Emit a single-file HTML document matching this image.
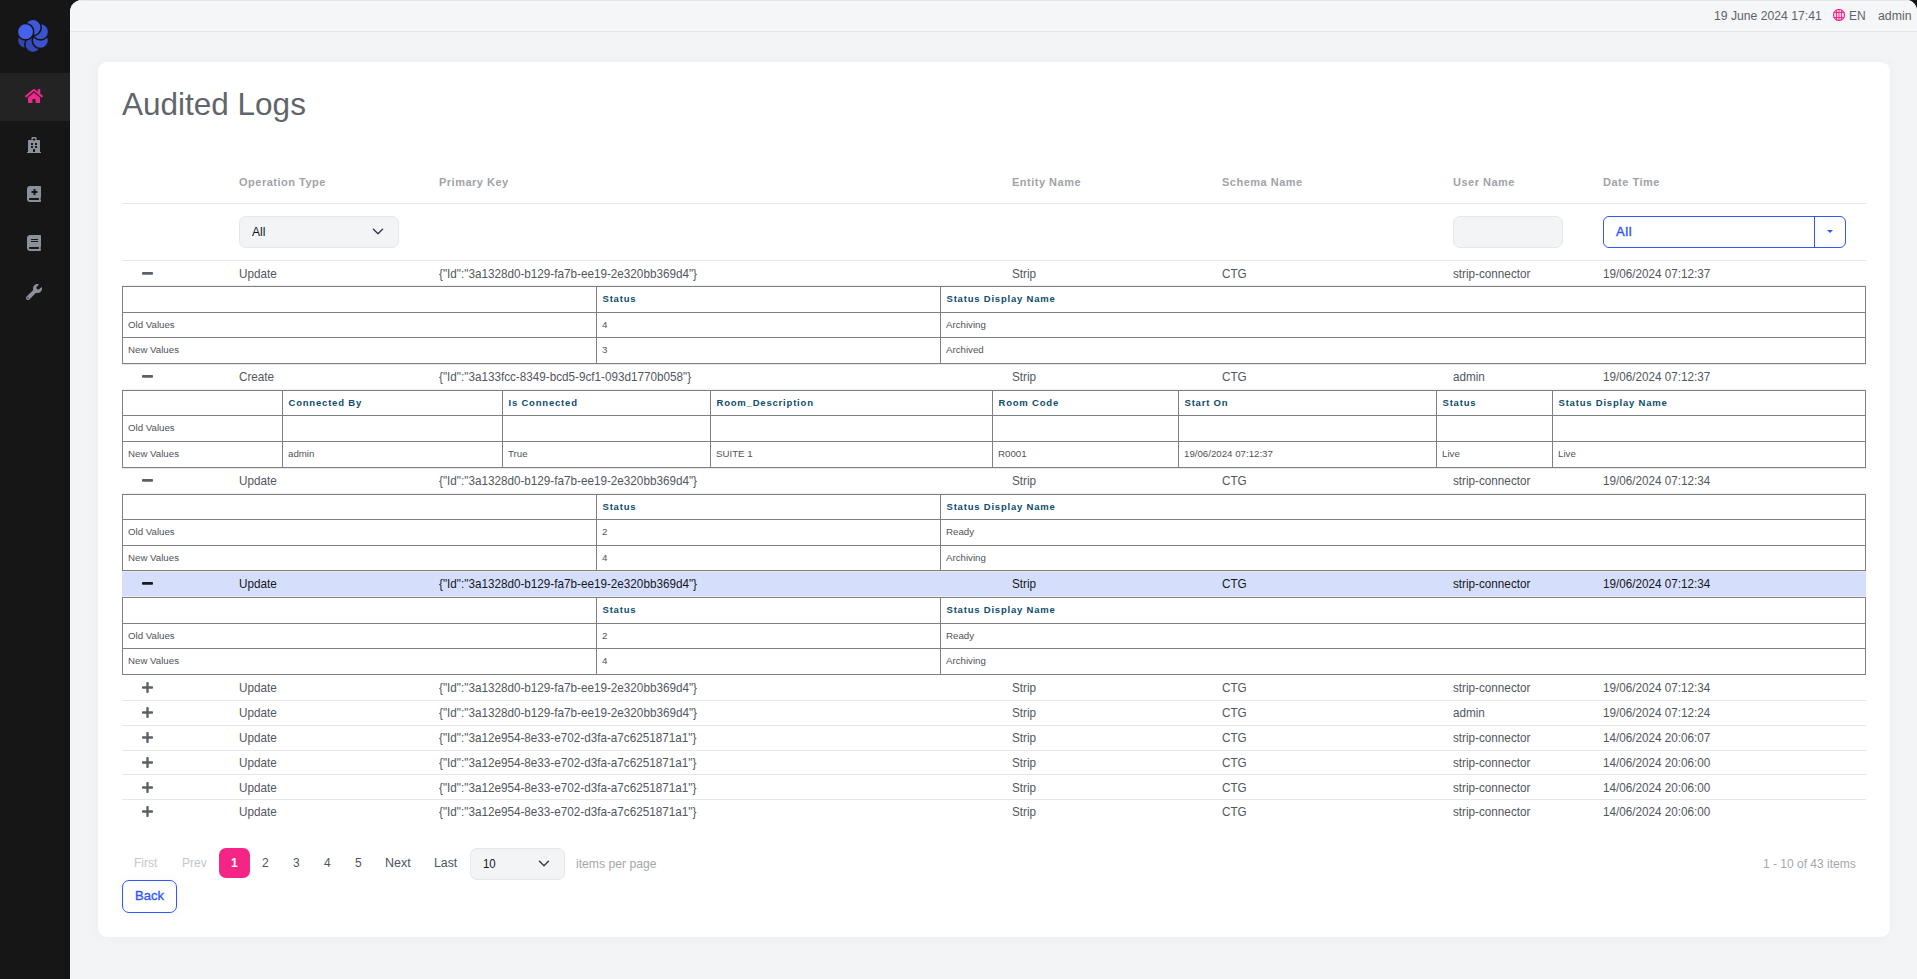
<!DOCTYPE html>
<html><head><meta charset="utf-8">
<style>
*{box-sizing:border-box;margin:0;padding:0}
html,body{width:1917px;height:979px;overflow:hidden}
body{background:#161616;font-family:"Liberation Sans",sans-serif;position:relative}
.abs{position:absolute}
#main{left:70px;top:0;width:1847px;height:979px;background:#f3f4f6;border-top-left-radius:12px;border-top-right-radius:11px;overflow:hidden}
#hdr{left:0;top:0;width:1847px;height:32px;border-top:1px solid #e5e7eb;border-bottom:1px solid #e5e7eb;background:#f5f6f8}
.t{position:absolute;white-space:pre;line-height:14px}
#card{left:98px;top:62px;width:1792px;height:875px;background:#fff;border-radius:9px;box-shadow:0 0 14px rgba(0,0,0,0.035)}
.hl{position:absolute;left:122px;width:1744px;height:1px;background:#e5e7eb}
.th{font-size:11px;font-weight:bold;letter-spacing:0.5px;color:#9fa3a8}
.td{font-size:13px;color:#52575d;transform:scaleX(0.9);transform-origin:0 0}
.hi .td{color:#16181b}
.gl{position:absolute;background:#808080}
.nh{font-size:9.5px;font-weight:bold;letter-spacing:0.8px;color:#0d4c6a}
.nv{font-size:9.7px;color:#4f5358}
.sel{position:absolute;background:#f3f4f6;border:1px solid #e5e7eb;border-radius:7px}
</style></head><body>
<div id="main" class="abs"><div id="hdr" class="abs"></div></div>
<div class="abs" style="left:0;top:73px;width:70px;height:48px;background:#232323"></div>

<svg class="abs" style="left:25px;top:88px;width:18px;height:16px" viewBox="0 0 576 512" preserveAspectRatio="none"><path fill="#e82a88" d="M280.37 148.26L96 300.11V464a16 16 0 0 0 16 16l112.06-.29a16 16 0 0 0 15.92-16V368a16 16 0 0 1 16-16h64a16 16 0 0 1 16 16v95.64a16 16 0 0 0 16 16.05L464 480a16 16 0 0 0 16-16V300L295.67 148.26a12.19 12.19 0 0 0-15.3 0zM571.6 251.47L488 182.56V44.05a12 12 0 0 0-12-12h-56a12 12 0 0 0-12 12v72.61L318.47 43a48 48 0 0 0-61 0L4.34 251.47a12 12 0 0 0-1.6 16.9l25.5 31A12 12 0 0 0 45.15 301l235.22-193.74a12.19 12.19 0 0 1 15.3 0L530.9 301a12 12 0 0 0 16.9-1.6l25.5-31a12 12 0 0 0-1.7-16.93z"/></svg>
<svg class="abs" style="left:27px;top:137px;width:14px;height:16px" viewBox="0 0 448 512" preserveAspectRatio="none"><path fill="#8b909a" d="M448 492v20H0v-20c0-6.627 5.373-12 12-12h20V120c0-13.255 10.745-24 24-24h88V24c0-13.255 10.745-24 24-24h112c13.255 0 24 10.745 24 24v72h88c13.255 0 24 10.745 24 24v360h20c6.627 0 12 5.373 12 12zM308 192h-40c-6.627 0-12 5.373-12 12v40c0 6.627 5.373 12 12 12h40c6.627 0 12-5.373 12-12v-40c0-6.627-5.373-12-12-12zm-168 64h40c6.627 0 12-5.373 12-12v-40c0-6.627-5.373-12-12-12h-40c-6.627 0-12 5.373-12 12v40c0 6.627 5.373 12 12 12zm104 128h-40c-6.627 0-12 5.373-12 12v84h64v-84c0-6.627-5.373-12-12-12zm64-96h-40c-6.627 0-12 5.373-12 12v40c0 6.627 5.373 12 12 12h40c6.627 0 12-5.373 12-12v-40c0-6.627-5.373-12-12-12zm-116 12c0-6.627-5.373-12-12-12h-40c-6.627 0-12 5.373-12 12v40c0 6.627 5.373 12 12 12h40c6.627 0 12-5.373 12-12v-40zM182 96h26v26a6 6 0 0 0 6 6h20a6 6 0 0 0 6-6V96h26a6 6 0 0 0 6-6V70a6 6 0 0 0-6-6h-26V38a6 6 0 0 0-6-6h-20a6 6 0 0 0-6 6v26h-26a6 6 0 0 0-6 6v20a6 6 0 0 0 6 6z"/></svg>
<svg class="abs" style="left:27px;top:186px;width:14px;height:16px" viewBox="0 0 448 512" preserveAspectRatio="none"><path fill="#8b909a" d="M448 358.4V25.6c0-16-9.6-25.6-25.6-25.6H96C41.6 0 0 41.6 0 96v320c0 54.4 41.6 96 96 96h326.4c12.8 0 25.6-9.6 25.6-25.6v-16c0-6.4-3.2-12.8-9.6-19.2-3.2-16-3.2-60.8 0-73.6 6.4-3.2 9.6-9.6 9.6-19.2zM144 168a8 8 0 0 1 8-8h56v-56a8 8 0 0 1 8-8h48a8 8 0 0 1 8 8v56h56a8 8 0 0 1 8 8v48a8 8 0 0 1-8 8h-56v56a8 8 0 0 1-8 8h-48a8 8 0 0 1-8-8v-56h-56a8 8 0 0 1-8-8zm236.8 280H96c-19.2 0-32-12.8-32-32s16-32 32-32h284.8z"/></svg>
<svg class="abs" style="left:27px;top:235px;width:14px;height:16px" viewBox="0 0 448 512" preserveAspectRatio="none"><path fill="#8b909a" d="M448 360V24c0-13.3-10.7-24-24-24H96C43 0 0 43 0 96v320c0 53 43 96 96 96h328c13.3 0 24-10.7 24-24v-16c0-7.5-3.5-14.3-8.9-18.7-4.2-15.4-4.2-59.3 0-74.7 5.4-4.3 8.9-11.1 8.9-18.6zM128 134c0-3.3 2.7-6 6-6h212c3.3 0 6 2.7 6 6v20c0 3.3-2.7 6-6 6H134c-3.3 0-6-2.7-6-6v-20zm0 64c0-3.3 2.7-6 6-6h212c3.300 0 6 2.7 6 6v20c0 3.3-2.7 6-6 6H134c-3.3 0-6-2.7-6-6v-20zm253.4 250H96c-17.7 0-32-14.3-32-32 0-17.6 14.4-32 32-32h285.4c-1.9 17.1-1.9 46.9 0 64z"/></svg>
<svg class="abs" style="left:26px;top:284px;width:16px;height:16px" viewBox="0 0 512 512" preserveAspectRatio="none"><path fill="#8b909a" d="M507.73 109.1c-2.240-9.03-13.54-12.09-20.12-5.51l-74.36 74.36-67.88-11.31-11.31-67.88 74.36-74.36c6.62-6.62 3.43-17.9-5.66-20.16-47.38-11.74-99.55.91-136.58 37.93-39.64 39.64-50.55 97.1-34.05 147.2L18.74 402.76c-24.99 24.99-24.99 65.51 0 90.5 24.99 24.99 65.51 24.99 90.5 0l213.21-213.21c50.12 16.71 107.47 5.68 147.37-34.22 37.07-37.07 49.7-89.32 37.91-136.73zM64 472c-13.25 0-24-10.75-24-24 0-13.26 10.75-24 24-24s24 10.74 24 24c0 13.25-10.75 24-24 24z"/></svg>
<svg class="abs" style="left:0;top:0;width:70px;height:72px" viewBox="0 0 70 72"><circle cx="25.55" cy="40.30" r="8.2" fill="#3347b0" stroke="#161616" stroke-width="1.6"/><circle cx="33.00" cy="44.60" r="8.2" fill="#3448b8" stroke="#161616" stroke-width="1.6"/><circle cx="40.45" cy="40.30" r="8.2" fill="#3a52cc" stroke="#161616" stroke-width="1.6"/><circle cx="40.45" cy="31.70" r="8.2" fill="#3a54d0" stroke="#161616" stroke-width="1.6"/><circle cx="33.00" cy="27.40" r="8.2" fill="#3d58d8" stroke="#161616" stroke-width="1.6"/><circle cx="25.55" cy="31.70" r="8.2" fill="#4562ee" stroke="#161616" stroke-width="1.6"/></svg>
<div class="t " style="left:1714px;top:9px;font-size:12.2px;color:#5e636b">19 June 2024 17:41</div>
<svg class="abs" style="left:1833px;top:9px;width:12px;height:12px" viewBox="0 0 12 12"><circle cx="6" cy="6" r="5.6" fill="#fbd3e4"/><circle cx="6" cy="6" r="5.5" fill="none" stroke="#f52585" stroke-width="1.1"/><path d="M0.5 3.5H11.5M0.5 8.5H11.5M3.5 0.8V11.2M6 0.5V11.5M8.5 0.8V11.2" stroke="#f52585" stroke-width="0.9" fill="none"/></svg>
<div class="t " style="left:1849px;top:9px;font-size:12px;color:#5e636b">EN</div>
<div class="t " style="left:1878px;top:9px;font-size:12.3px;color:#5e636b">admin</div>
<div id="card" class="abs"></div>
<div class="t " style="left:122px;top:86px;font-size:31.5px;line-height:36px;color:#60656b">Audited Logs</div>
<div class="t th" style="left:239px;top:175px;">Operation Type</div>
<div class="t th" style="left:439px;top:175px;">Primary Key</div>
<div class="t th" style="left:1012px;top:175px;">Entity Name</div>
<div class="t th" style="left:1222px;top:175px;">Schema Name</div>
<div class="t th" style="left:1453px;top:175px;">User Name</div>
<div class="t th" style="left:1603px;top:175px;">Date Time</div>
<div class="hl" style="top:203px"></div>
<div class="hl" style="top:260px"></div>
<div class="sel" style="left:239px;top:216px;width:160px;height:32px"></div>
<div class="t " style="left:252px;top:225px;font-size:13px;color:#111827;transform:scaleX(0.93);transform-origin:0 0">All</div>
<svg class="abs" style="left:371px;top:226px;width:14px;height:10px" viewBox="0 0 14 10"><polyline points="2.5,3.2 7,7.7 11.5,3.2" fill="none" stroke="#374151" stroke-width="1.5" stroke-linecap="round" stroke-linejoin="round"/></svg>
<div class="abs" style="left:1603px;top:216px;width:243px;height:32px;border:1px solid #3355ff;border-radius:6px;background:#fff"></div>
<div class="abs" style="left:1814px;top:216px;width:1px;height:32px;background:#3355ff"></div>
<svg class="abs" style="left:1827px;top:230px;width:6px;height:3px" viewBox="0 0 6 3"><polygon points="0,0 6,0 3,3" fill="#3355ff"/></svg>
<div class="t " style="left:1616px;top:225px;font-size:13px;letter-spacing:0.6px;color:#3355ff;-webkit-text-stroke:0.4px #3355ff">All</div>
<div class="sel" style="left:1453px;top:216px;width:110px;height:32px"></div>
<div class="hl" style="top:364px"></div>
<div class="hl" style="top:468px"></div>
<div class="hl" style="top:571px"></div>
<div class="hl" style="top:285px;background:#eef0f3"></div>
<div class="hl" style="top:389px;background:#eef0f3"></div>
<div class="hl" style="top:493px;background:#eef0f3"></div>
<div class="hl" style="top:596px;background:#eef0f3"></div>
<svg class="abs" style="left:142px;top:272.3px;width:11px;height:2.8px" viewBox="0 208 448 96" preserveAspectRatio="none"><path fill="#5b6066" d="M416 208H32c-17.67 0-32 14.33-32 32v32c0 17.67 14.33 32 32 32h384c17.67 0 32-14.330 32-32v-32c0-17.67-14.33-32-32-32z"/></svg>
<div class="t td" style="left:239px;top:267.0px;">Update</div>
<div class="t td" style="left:439px;top:267.0px;">{&quot;Id&quot;:&quot;3a1328d0-b129-fa7b-ee19-2e320bb369d4&quot;}</div>
<div class="t td" style="left:1012px;top:267.0px;">Strip</div>
<div class="t td" style="left:1222px;top:267.0px;">CTG</div>
<div class="t td" style="left:1453px;top:267.0px;">strip-connector</div>
<div class="t td" style="left:1603px;top:267.0px;">19/06/2024 07:12:37</div>
<div class="gl" style="left:122px;top:286px;width:1744px;height:1px"></div>
<div class="gl" style="left:122px;top:312px;width:1744px;height:1px"></div>
<div class="gl" style="left:122px;top:337px;width:1744px;height:1px"></div>
<div class="gl" style="left:122px;top:363px;width:1744px;height:1px"></div>
<div class="gl" style="left:122px;top:286px;width:1px;height:78px"></div>
<div class="gl" style="left:596px;top:286px;width:1px;height:78px"></div>
<div class="gl" style="left:940px;top:286px;width:1px;height:78px"></div>
<div class="gl" style="left:1865px;top:286px;width:1px;height:78px"></div>
<div class="t nh" style="left:602.5px;top:292.0px">Status</div>
<div class="t nh" style="left:946.5px;top:292.0px">Status Display Name</div>
<div class="t nv" style="left:128px;top:317.5px">Old Values</div>
<div class="t nv" style="left:602px;top:317.5px">4</div>
<div class="t nv" style="left:946px;top:317.5px">Archiving</div>
<div class="t nv" style="left:128px;top:343.0px">New Values</div>
<div class="t nv" style="left:602px;top:343.0px">3</div>
<div class="t nv" style="left:946px;top:343.0px">Archived</div>
<svg class="abs" style="left:142px;top:374.8px;width:11px;height:2.8px" viewBox="0 208 448 96" preserveAspectRatio="none"><path fill="#5b6066" d="M416 208H32c-17.67 0-32 14.33-32 32v32c0 17.67 14.33 32 32 32h384c17.67 0 32-14.330 32-32v-32c0-17.67-14.33-32-32-32z"/></svg>
<div class="t td" style="left:239px;top:369.5px;">Create</div>
<div class="t td" style="left:439px;top:369.5px;">{&quot;Id&quot;:&quot;3a133fcc-8349-bcd5-9cf1-093d1770b058&quot;}</div>
<div class="t td" style="left:1012px;top:369.5px;">Strip</div>
<div class="t td" style="left:1222px;top:369.5px;">CTG</div>
<div class="t td" style="left:1453px;top:369.5px;">admin</div>
<div class="t td" style="left:1603px;top:369.5px;">19/06/2024 07:12:37</div>
<div class="gl" style="left:122px;top:390px;width:1744px;height:1px"></div>
<div class="gl" style="left:122px;top:415px;width:1744px;height:1px"></div>
<div class="gl" style="left:122px;top:441px;width:1744px;height:1px"></div>
<div class="gl" style="left:122px;top:467px;width:1744px;height:1px"></div>
<div class="gl" style="left:122px;top:390px;width:1px;height:78px"></div>
<div class="gl" style="left:282px;top:390px;width:1px;height:78px"></div>
<div class="gl" style="left:502px;top:390px;width:1px;height:78px"></div>
<div class="gl" style="left:710px;top:390px;width:1px;height:78px"></div>
<div class="gl" style="left:992px;top:390px;width:1px;height:78px"></div>
<div class="gl" style="left:1178px;top:390px;width:1px;height:78px"></div>
<div class="gl" style="left:1436px;top:390px;width:1px;height:78px"></div>
<div class="gl" style="left:1552px;top:390px;width:1px;height:78px"></div>
<div class="gl" style="left:1865px;top:390px;width:1px;height:78px"></div>
<div class="t nh" style="left:288.5px;top:395.5px">Connected By</div>
<div class="t nh" style="left:508.5px;top:395.5px">Is Connected</div>
<div class="t nh" style="left:716.5px;top:395.5px">Room_Description</div>
<div class="t nh" style="left:998.5px;top:395.5px">Room Code</div>
<div class="t nh" style="left:1184.5px;top:395.5px">Start On</div>
<div class="t nh" style="left:1442.5px;top:395.5px">Status</div>
<div class="t nh" style="left:1558.5px;top:395.5px">Status Display Name</div>
<div class="t nv" style="left:128px;top:421.0px">Old Values</div>
<div class="t nv" style="left:128px;top:447.0px">New Values</div>
<div class="t nv" style="left:288px;top:447.0px">admin</div>
<div class="t nv" style="left:508px;top:447.0px">True</div>
<div class="t nv" style="left:716px;top:447.0px">SUITE 1</div>
<div class="t nv" style="left:998px;top:447.0px">R0001</div>
<div class="t nv" style="left:1184px;top:447.0px">19/06/2024 07:12:37</div>
<div class="t nv" style="left:1442px;top:447.0px">Live</div>
<div class="t nv" style="left:1558px;top:447.0px">Live</div>
<svg class="abs" style="left:142px;top:478.8px;width:11px;height:2.8px" viewBox="0 208 448 96" preserveAspectRatio="none"><path fill="#5b6066" d="M416 208H32c-17.67 0-32 14.33-32 32v32c0 17.67 14.33 32 32 32h384c17.67 0 32-14.330 32-32v-32c0-17.67-14.33-32-32-32z"/></svg>
<div class="t td" style="left:239px;top:473.5px;">Update</div>
<div class="t td" style="left:439px;top:473.5px;">{&quot;Id&quot;:&quot;3a1328d0-b129-fa7b-ee19-2e320bb369d4&quot;}</div>
<div class="t td" style="left:1012px;top:473.5px;">Strip</div>
<div class="t td" style="left:1222px;top:473.5px;">CTG</div>
<div class="t td" style="left:1453px;top:473.5px;">strip-connector</div>
<div class="t td" style="left:1603px;top:473.5px;">19/06/2024 07:12:34</div>
<div class="gl" style="left:122px;top:494px;width:1744px;height:1px"></div>
<div class="gl" style="left:122px;top:519px;width:1744px;height:1px"></div>
<div class="gl" style="left:122px;top:545px;width:1744px;height:1px"></div>
<div class="gl" style="left:122px;top:570px;width:1744px;height:1px"></div>
<div class="gl" style="left:122px;top:494px;width:1px;height:77px"></div>
<div class="gl" style="left:596px;top:494px;width:1px;height:77px"></div>
<div class="gl" style="left:940px;top:494px;width:1px;height:77px"></div>
<div class="gl" style="left:1865px;top:494px;width:1px;height:77px"></div>
<div class="t nh" style="left:602.5px;top:499.5px">Status</div>
<div class="t nh" style="left:946.5px;top:499.5px">Status Display Name</div>
<div class="t nv" style="left:128px;top:525.0px">Old Values</div>
<div class="t nv" style="left:602px;top:525.0px">2</div>
<div class="t nv" style="left:946px;top:525.0px">Ready</div>
<div class="t nv" style="left:128px;top:550.5px">New Values</div>
<div class="t nv" style="left:602px;top:550.5px">4</div>
<div class="t nv" style="left:946px;top:550.5px">Archiving</div>
<div class="abs" style="left:122px;top:572px;width:1744px;height:24px;background:#d5dffc"></div>
<svg class="abs" style="left:142px;top:581.8px;width:11px;height:2.8px" viewBox="0 208 448 96" preserveAspectRatio="none"><path fill="#17191c" d="M416 208H32c-17.67 0-32 14.33-32 32v32c0 17.67 14.33 32 32 32h384c17.67 0 32-14.330 32-32v-32c0-17.67-14.33-32-32-32z"/></svg>
<div class="t td" style="left:239px;top:576.5px;color:#16181b">Update</div>
<div class="t td" style="left:439px;top:576.5px;color:#16181b">{&quot;Id&quot;:&quot;3a1328d0-b129-fa7b-ee19-2e320bb369d4&quot;}</div>
<div class="t td" style="left:1012px;top:576.5px;color:#16181b">Strip</div>
<div class="t td" style="left:1222px;top:576.5px;color:#16181b">CTG</div>
<div class="t td" style="left:1453px;top:576.5px;color:#16181b">strip-connector</div>
<div class="t td" style="left:1603px;top:576.5px;color:#16181b">19/06/2024 07:12:34</div>
<div class="gl" style="left:122px;top:597px;width:1744px;height:1px"></div>
<div class="gl" style="left:122px;top:623px;width:1744px;height:1px"></div>
<div class="gl" style="left:122px;top:648px;width:1744px;height:1px"></div>
<div class="gl" style="left:122px;top:674px;width:1744px;height:1px"></div>
<div class="gl" style="left:122px;top:597px;width:1px;height:78px"></div>
<div class="gl" style="left:596px;top:597px;width:1px;height:78px"></div>
<div class="gl" style="left:940px;top:597px;width:1px;height:78px"></div>
<div class="gl" style="left:1865px;top:597px;width:1px;height:78px"></div>
<div class="t nh" style="left:602.5px;top:603.0px">Status</div>
<div class="t nh" style="left:946.5px;top:603.0px">Status Display Name</div>
<div class="t nv" style="left:128px;top:628.5px">Old Values</div>
<div class="t nv" style="left:602px;top:628.5px">2</div>
<div class="t nv" style="left:946px;top:628.5px">Ready</div>
<div class="t nv" style="left:128px;top:654.0px">New Values</div>
<div class="t nv" style="left:602px;top:654.0px">4</div>
<div class="t nv" style="left:946px;top:654.0px">Archiving</div>
<svg class="abs" style="left:142px;top:682.0px;width:11px;height:11px" viewBox="0 32 448 448"><path fill="#5b6066" d="M416 208H272V64c0-17.67-14.33-32-32-32h-32c-17.67 0-32 14.33-32 32v144H32c-17.67 0-32 14.33-32 32v32c0 17.67 14.33 32 32 32h144v144c0 17.67 14.33 32 32 32h32c17.67 0 32-14.33 32-32V304h144c17.67 0 32-14.33 32-32v-32c0-17.67-14.33-32-32-32z"/></svg>
<div class="t td" style="left:239px;top:681.0px;">Update</div>
<div class="t td" style="left:439px;top:681.0px;">{&quot;Id&quot;:&quot;3a1328d0-b129-fa7b-ee19-2e320bb369d4&quot;}</div>
<div class="t td" style="left:1012px;top:681.0px;">Strip</div>
<div class="t td" style="left:1222px;top:681.0px;">CTG</div>
<div class="t td" style="left:1453px;top:681.0px;">strip-connector</div>
<div class="t td" style="left:1603px;top:681.0px;">19/06/2024 07:12:34</div>
<div class="hl" style="top:700px"></div>
<svg class="abs" style="left:142px;top:706.8px;width:11px;height:11px" viewBox="0 32 448 448"><path fill="#5b6066" d="M416 208H272V64c0-17.67-14.33-32-32-32h-32c-17.67 0-32 14.33-32 32v144H32c-17.67 0-32 14.33-32 32v32c0 17.67 14.33 32 32 32h144v144c0 17.67 14.33 32 32 32h32c17.67 0 32-14.33 32-32V304h144c17.67 0 32-14.33 32-32v-32c0-17.67-14.33-32-32-32z"/></svg>
<div class="t td" style="left:239px;top:705.8px;">Update</div>
<div class="t td" style="left:439px;top:705.8px;">{&quot;Id&quot;:&quot;3a1328d0-b129-fa7b-ee19-2e320bb369d4&quot;}</div>
<div class="t td" style="left:1012px;top:705.8px;">Strip</div>
<div class="t td" style="left:1222px;top:705.8px;">CTG</div>
<div class="t td" style="left:1453px;top:705.8px;">admin</div>
<div class="t td" style="left:1603px;top:705.8px;">19/06/2024 07:12:24</div>
<div class="hl" style="top:725px"></div>
<svg class="abs" style="left:142px;top:732.0px;width:11px;height:11px" viewBox="0 32 448 448"><path fill="#5b6066" d="M416 208H272V64c0-17.67-14.33-32-32-32h-32c-17.67 0-32 14.33-32 32v144H32c-17.67 0-32 14.33-32 32v32c0 17.67 14.33 32 32 32h144v144c0 17.67 14.33 32 32 32h32c17.67 0 32-14.33 32-32V304h144c17.67 0 32-14.33 32-32v-32c0-17.67-14.33-32-32-32z"/></svg>
<div class="t td" style="left:239px;top:731.0px;">Update</div>
<div class="t td" style="left:439px;top:731.0px;">{&quot;Id&quot;:&quot;3a12e954-8e33-e702-d3fa-a7c6251871a1&quot;}</div>
<div class="t td" style="left:1012px;top:731.0px;">Strip</div>
<div class="t td" style="left:1222px;top:731.0px;">CTG</div>
<div class="t td" style="left:1453px;top:731.0px;">strip-connector</div>
<div class="t td" style="left:1603px;top:731.0px;">14/06/2024 20:06:07</div>
<div class="hl" style="top:750px"></div>
<svg class="abs" style="left:142px;top:757.1px;width:11px;height:11px" viewBox="0 32 448 448"><path fill="#5b6066" d="M416 208H272V64c0-17.67-14.33-32-32-32h-32c-17.67 0-32 14.33-32 32v144H32c-17.67 0-32 14.33-32 32v32c0 17.67 14.33 32 32 32h144v144c0 17.67 14.33 32 32 32h32c17.67 0 32-14.33 32-32V304h144c17.67 0 32-14.33 32-32v-32c0-17.67-14.33-32-32-32z"/></svg>
<div class="t td" style="left:239px;top:756.1px;">Update</div>
<div class="t td" style="left:439px;top:756.1px;">{&quot;Id&quot;:&quot;3a12e954-8e33-e702-d3fa-a7c6251871a1&quot;}</div>
<div class="t td" style="left:1012px;top:756.1px;">Strip</div>
<div class="t td" style="left:1222px;top:756.1px;">CTG</div>
<div class="t td" style="left:1453px;top:756.1px;">strip-connector</div>
<div class="t td" style="left:1603px;top:756.1px;">14/06/2024 20:06:00</div>
<div class="hl" style="top:774px"></div>
<svg class="abs" style="left:142px;top:781.9px;width:11px;height:11px" viewBox="0 32 448 448"><path fill="#5b6066" d="M416 208H272V64c0-17.67-14.33-32-32-32h-32c-17.67 0-32 14.33-32 32v144H32c-17.67 0-32 14.33-32 32v32c0 17.67 14.33 32 32 32h144v144c0 17.67 14.33 32 32 32h32c17.67 0 32-14.33 32-32V304h144c17.67 0 32-14.33 32-32v-32c0-17.67-14.33-32-32-32z"/></svg>
<div class="t td" style="left:239px;top:780.9px;">Update</div>
<div class="t td" style="left:439px;top:780.9px;">{&quot;Id&quot;:&quot;3a12e954-8e33-e702-d3fa-a7c6251871a1&quot;}</div>
<div class="t td" style="left:1012px;top:780.9px;">Strip</div>
<div class="t td" style="left:1222px;top:780.9px;">CTG</div>
<div class="t td" style="left:1453px;top:780.9px;">strip-connector</div>
<div class="t td" style="left:1603px;top:780.9px;">14/06/2024 20:06:00</div>
<div class="hl" style="top:799px"></div>
<svg class="abs" style="left:142px;top:806.0px;width:11px;height:11px" viewBox="0 32 448 448"><path fill="#5b6066" d="M416 208H272V64c0-17.67-14.33-32-32-32h-32c-17.67 0-32 14.33-32 32v144H32c-17.67 0-32 14.33-32 32v32c0 17.67 14.33 32 32 32h144v144c0 17.67 14.33 32 32 32h32c17.67 0 32-14.33 32-32V304h144c17.67 0 32-14.33 32-32v-32c0-17.67-14.33-32-32-32z"/></svg>
<div class="t td" style="left:239px;top:805.0px;">Update</div>
<div class="t td" style="left:439px;top:805.0px;">{&quot;Id&quot;:&quot;3a12e954-8e33-e702-d3fa-a7c6251871a1&quot;}</div>
<div class="t td" style="left:1012px;top:805.0px;">Strip</div>
<div class="t td" style="left:1222px;top:805.0px;">CTG</div>
<div class="t td" style="left:1453px;top:805.0px;">strip-connector</div>
<div class="t td" style="left:1603px;top:805.0px;">14/06/2024 20:06:00</div>
<div class="t " style="left:134px;top:856px;font-size:12px;color:#c3c6cb">First</div>
<div class="t " style="left:182px;top:856px;font-size:12px;color:#c3c6cb">Prev</div>
<div class="abs" style="left:219px;top:848px;width:31px;height:30px;background:#f52585;border-radius:7px"></div>
<div class="t " style="left:231px;top:856px;font-size:12px;font-weight:bold;color:#fff">1</div>
<div class="t " style="left:262px;top:856px;font-size:12px;color:#4b5563">2</div>
<div class="t " style="left:293px;top:856px;font-size:12px;color:#4b5563">3</div>
<div class="t " style="left:324px;top:856px;font-size:12px;color:#4b5563">4</div>
<div class="t " style="left:355px;top:856px;font-size:12px;color:#4b5563">5</div>
<div class="t " style="left:385px;top:856px;font-size:12.5px;color:#4b5563">Next</div>
<div class="t " style="left:434px;top:856px;font-size:12.3px;color:#4b5563">Last</div>
<div class="sel" style="left:470px;top:848px;width:95px;height:32px"></div>
<div class="t " style="left:483px;top:857px;font-size:13px;color:#111827;transform:scaleX(0.88);transform-origin:0 0">10</div>
<svg class="abs" style="left:537px;top:858px;width:14px;height:10px" viewBox="0 0 14 10"><polyline points="2.5,3.2 7,7.7 11.5,3.2" fill="none" stroke="#374151" stroke-width="1.5" stroke-linecap="round" stroke-linejoin="round"/></svg>
<div class="t " style="left:576px;top:857px;font-size:12.2px;color:#a3a7ad">items per page</div>
<div class="t " style="left:1763px;top:857px;font-size:12px;color:#a3a7ad">1 - 10 of 43 items</div>
<div class="abs" style="left:122px;top:880px;width:55px;height:33px;border:1px solid #3355ff;border-radius:7px;box-shadow:0 0 12px 4px rgba(0,0,0,0.018)"></div>
<div class="t " style="left:135px;top:889px;font-size:13px;color:#3355ff;-webkit-text-stroke:0.35px #3355ff">Back</div>
</body></html>
